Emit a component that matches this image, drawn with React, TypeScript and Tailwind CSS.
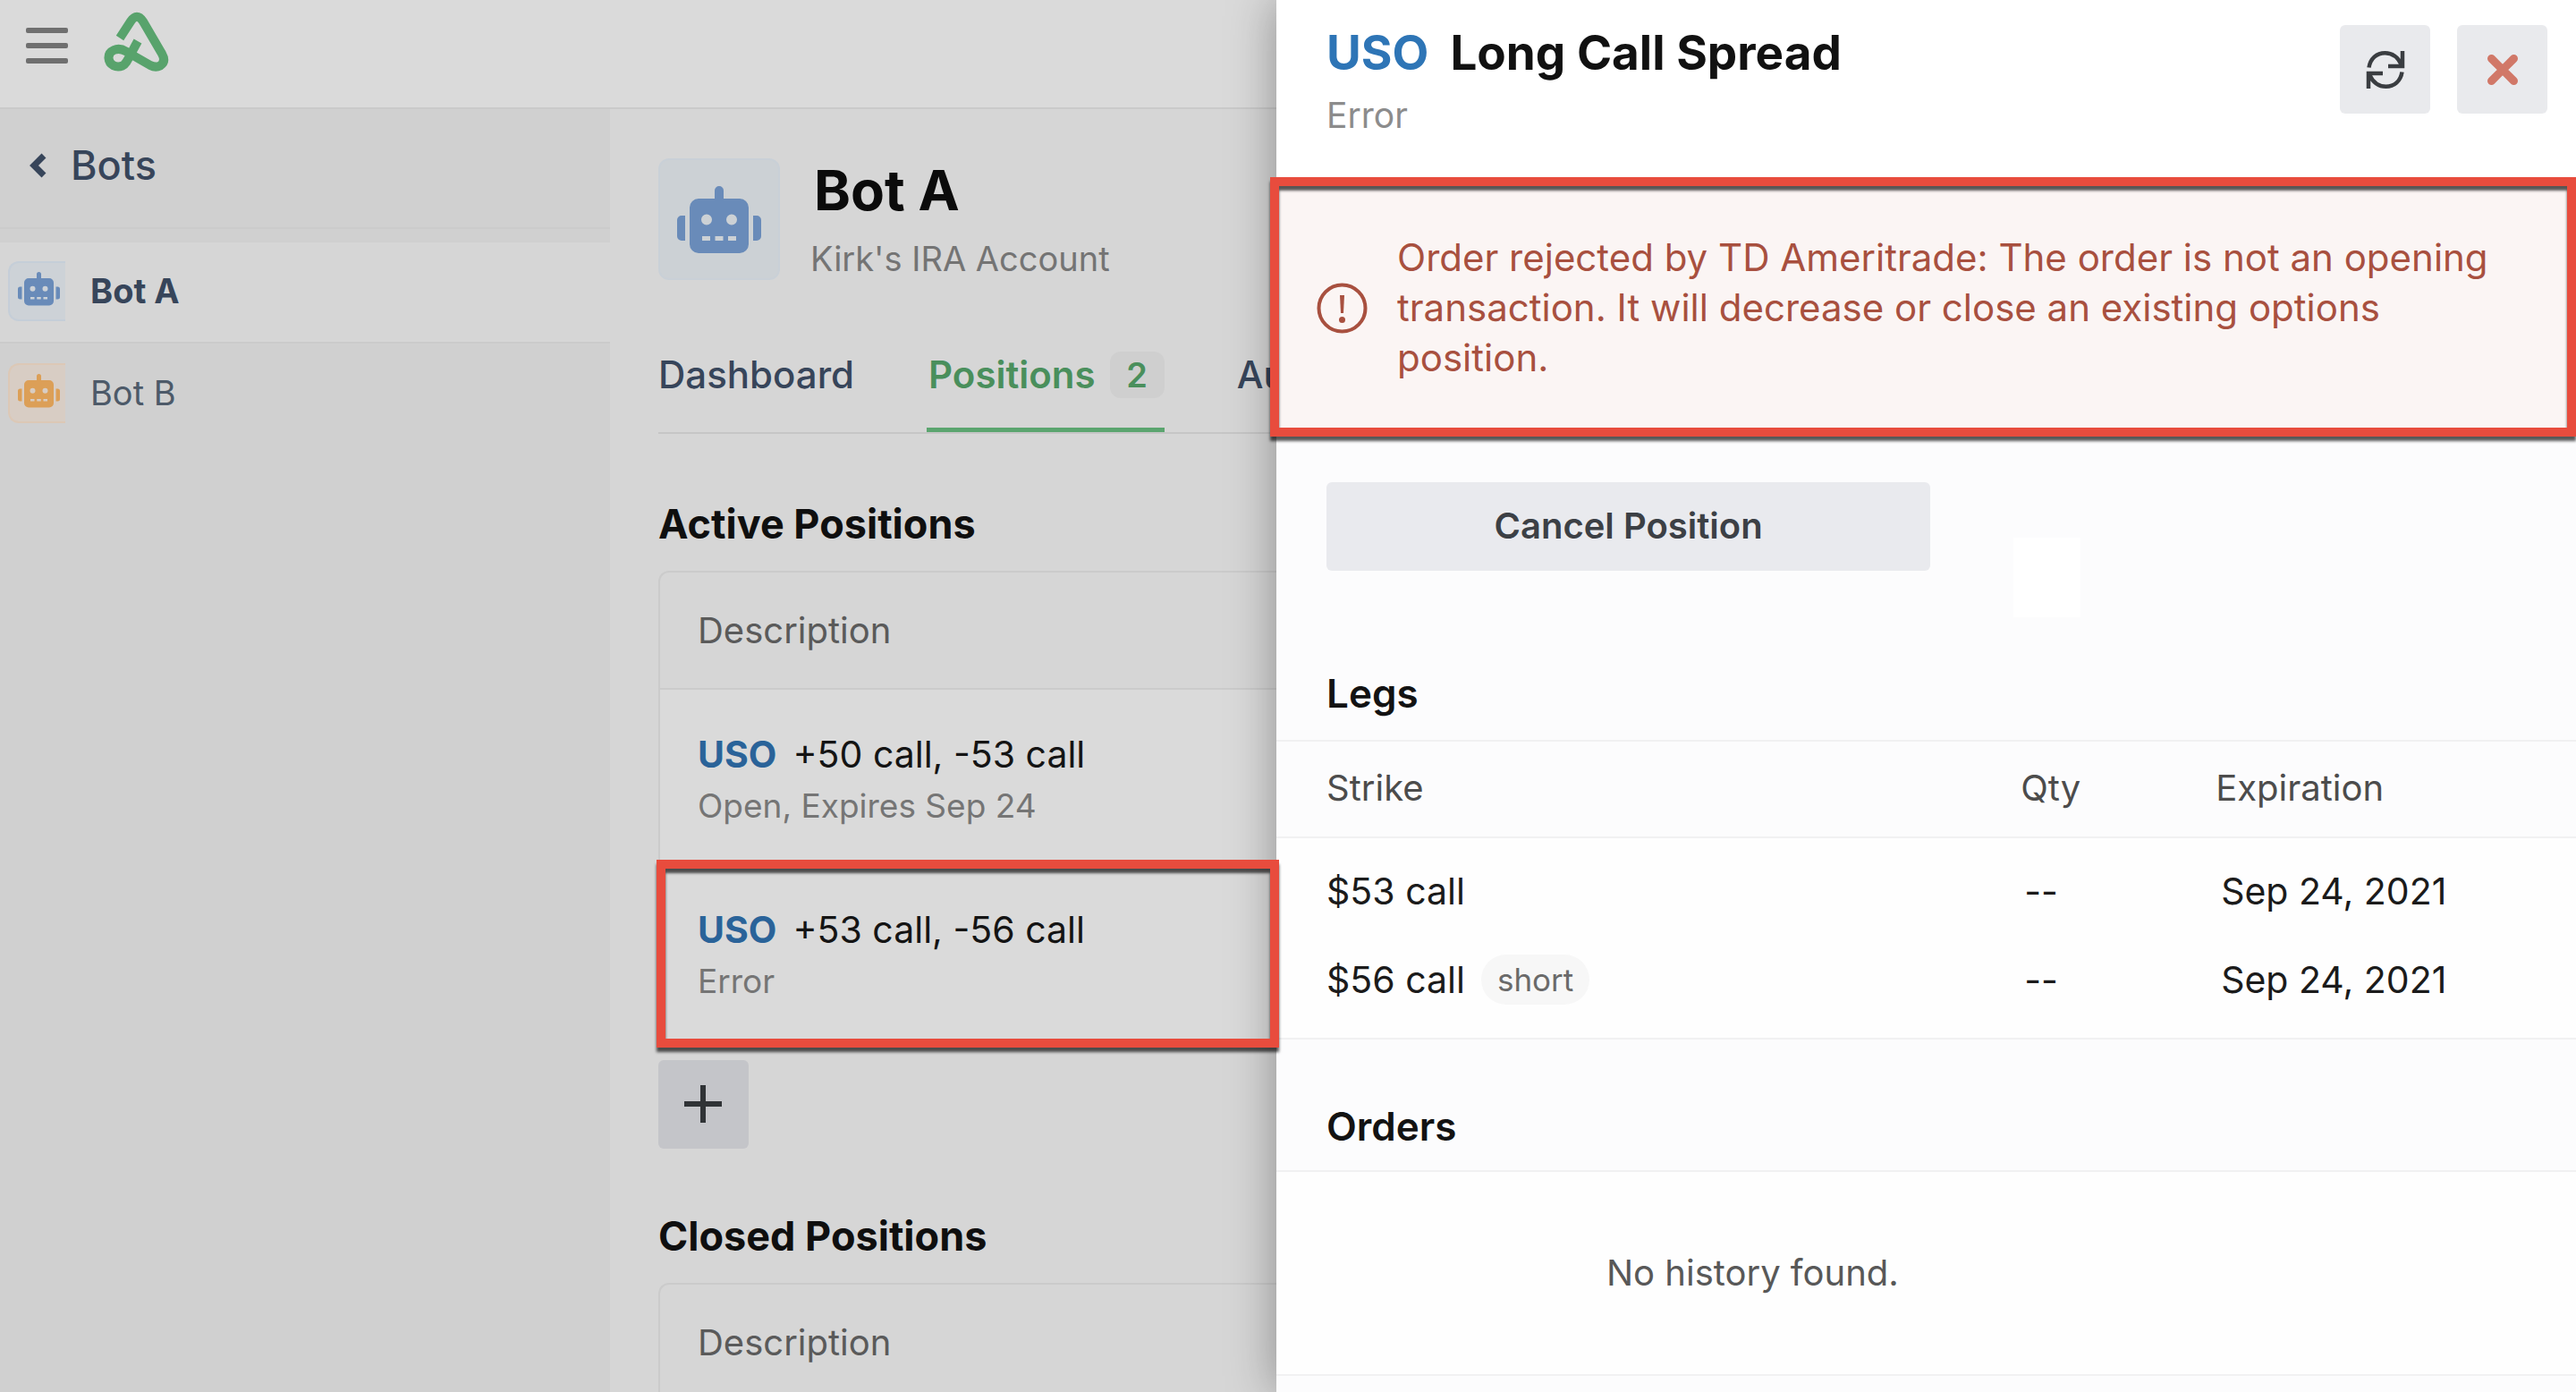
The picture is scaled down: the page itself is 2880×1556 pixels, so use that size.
import React from 'react';

interface Bot {
  name: string;
  active: boolean;
  tile: string;
  icon: string;
}

interface Position {
  symbol: string;
  legs: string;
  status: string;
  highlighted: boolean;
}

interface Leg {
  strike: string;
  short: boolean;
  qty: string;
  expiration: string;
}

const BOTS: Bot[] = [
  { name: 'Bot A', active: true, tile: 'border-[#c5ced8] bg-[#cdd2d7]', icon: 'text-[#698bb9]' },
  { name: 'Bot B', active: false, tile: 'border-[#dcc8b6] bg-[#d8cdc4]', icon: 'text-[#dc9f57]' },
];

const POSITIONS: Position[] = [
  { symbol: 'USO', legs: '+50 call, -53 call', status: 'Open, Expires Sep 24', highlighted: false },
  { symbol: 'USO', legs: '+53 call, -56 call', status: 'Error', highlighted: true },
];

const LEGS: Leg[] = [
  { strike: '$53 call', short: false, qty: '--', expiration: 'Sep 24, 2021' },
  { strike: '$56 call', short: true, qty: '--', expiration: 'Sep 24, 2021' },
];

function Logo() {
  return (
    <svg viewBox="116 13 74 68" className="h-[68px] w-[74px]" fill="none" stroke="#58a36c" strokeWidth="10" strokeLinejoin="round">
      <path d="M134 42.5 L146 24 Q153 13.500 160 24 L181 60 Q186 69 179 73.500 Q174 76 168 73 L141 57.500 C131 51.500 121 57 121.500 65 C122 73 130 76 137 73.500 C141.500 71.500 143 66 154 46" />
    </svg>
  );
}

function RobotIcon({ className }: { className: string }) {
  return (
    <svg viewBox="0 0 94 75" className={className} fill="currentColor">
      <path
        fillRule="evenodd"
        d="M42 5a5 5 0 0 1 10 0v9h18a10 10 0 0 1 10 10v41a10 10 0 0 1-10 10H24a10 10 0 0 1-10-10V24a10 10 0 0 1 10-10h18zM27 37.500a6 6 0 1 0 12 0a6 6 0 1 0-12 0zM55 37.500a6 6 0 1 0 12 0a6 6 0 1 0-12 0zM28 56v5h9v-5zM42.500 56v5h9v-5zM57 56v5h9v-5z"
      />
      <path d="M9 33v28H5a5 5 0 0 1-5-5V38a5 5 0 0 1 5-5zM85 33v28h4a5 5 0 0 0 5-5V38a5 5 0 0 0-5-5z" />
    </svg>
  );
}

function Sidebar() {
  return (
    <aside className="w-[682px] shrink-0 bg-[#d0d0d0]">
      <a href="#bots" className="mb-[15px] flex h-[134px] items-center border-b-2 border-[#cbcbcb] pb-[6px] pl-[32px] text-[45px] leading-[56px] font-medium text-[#37455a]">
        <svg viewBox="0 0 20 28" className="mr-[27px] h-7 w-5" fill="none" stroke="currentColor" strokeWidth="7">
          <path d="M17 3 L6 14 L17 25" />
        </svg>
        Bots
      </a>
      <nav>
        {BOTS.map((bot) => (
          <a
            key={bot.name}
            href="#bot"
            className={`flex h-[113px] items-center gap-[28px] pb-[3px] pl-[9px] text-[38px] leading-[56px] ${
              bot.active ? 'border-b-2 border-[#cbcbcb] bg-[#d6d6d6] font-bold text-[#37455a]' : 'text-[#4d5a69]'
            }`}
          >
            <span className={`flex h-[67px] w-[64px] items-center justify-center rounded-l-xl border-y-2 border-l-2 ${bot.tile}`}>
              <RobotIcon className={`mr-[-2px] mb-[4px] w-[47px] ${bot.icon}`} />
            </span>
            {bot.name}
          </a>
        ))}
      </nav>
    </aside>
  );
}

function PositionsTable({ rows }: { rows: Position[] }) {
  return (
    <div className="mt-6 rounded-tl-xl border-t-2 border-l-2 border-[#cbcbcb]">
      <table className="w-full border-separate border-spacing-0 text-left">
        <thead>
          <tr>
            <th className="h-[131px] border-b-2 border-[#cbcbcb] pl-[42px] text-[40px] leading-[56px] font-normal text-[#5a5a5a]">
              Description
            </th>
          </tr>
        </thead>
        <tbody>
          {rows.map((row) => (
            <tr key={row.legs}>
              <td className="relative bg-[#dadada] pt-[44px] pb-[36px] pl-[42px]">
                <div className="text-[41px] leading-[56px] text-[#141414]">
                  <span className="mr-[18px] font-bold text-[#2a6399]">{row.symbol}</span>
                  {row.legs}
                </div>
                <div className="text-[37px] leading-[60px] text-[#757575]">{row.status}</div>
                {row.highlighted && (
                  <div className="pointer-events-none absolute -top-[6px] -right-[3px] -bottom-[8px] -left-[4px] z-20 border-[10px] border-[#e84c3d] shadow-[0_5px_3px_rgba(0,0,0,0.65),inset_0_5px_3px_rgba(0,0,0,0.65)]" />
                )}
              </td>
            </tr>
          ))}
        </tbody>
      </table>
    </div>
  );
}

function BotPage() {
  return (
    <main className="min-w-0 flex-1 pt-[55px] pl-[54px]">
      <div className="flex h-[140px] items-start gap-[34px]">
        <div className="flex h-[136px] w-[136px] items-center justify-center rounded-xl border-2 border-[#c9d0d7] bg-[#ccd1d5]">
          <RobotIcon className="w-[94px] text-[#698bb9]" />
        </div>
        <div>
          <h1 className="pl-1 text-[62px] leading-[72px] font-bold text-[#0b0b0b]">Bot A</h1>
          <p className="mt-3 text-[38px] leading-[56px] text-[#747474]">Kirk's IRA Account</p>
        </div>
      </div>

      <nav className="mt-[76px] flex gap-[81px] border-b-2 border-[#c6c6c6] text-[42px] leading-[52px] font-medium text-[#37455a]">
        <a href="#dashboard">Dashboard</a>
        <a href="#positions" className="flex items-center gap-4 border-b-[5px] border-[#5ba56f] pb-[33px] pl-[2px] font-semibold text-[#4a8f5c]">
          Positions
          <span className="w-[61px] rounded-xl bg-[#cfcfcf] text-center text-[38px]">2</span>
        </a>
        <a href="#automations">Automations</a>
      </nav>

      <h2 className="mt-[73px] text-[45px] leading-[56px] font-bold text-[#0f0f0f]">Active Positions</h2>
      <PositionsTable rows={POSITIONS} />
      <button aria-label="Add position" className="mt-[22px] flex h-[99px] w-[101px] items-center justify-center rounded-md bg-[#c4c5c9] pr-[2px] pb-[2px]">
        <svg viewBox="0 0 42 42" className="h-[42px] w-[42px]" fill="none" stroke="#303336" strokeWidth="6">
          <path d="M21 0V42M0 21H42" />
        </svg>
      </button>

      <h2 className="mt-[70px] text-[45px] leading-[56px] font-bold text-[#0f0f0f]">Closed Positions</h2>
      <PositionsTable rows={[]} />
    </main>
  );
}

function OrderError() {
  return (
    <div role="alert" className="-ml-[7px] flex items-center gap-[33px] border-[10px] border-[#e84c3d] bg-[#fbf5f4] pt-[52px] pr-[70px] pb-[50px] pl-[42px] text-[#a8503f] shadow-[0_5px_3px_rgba(0,0,0,0.65),inset_0_5px_3px_rgba(0,0,0,0.65)]">
      <svg viewBox="0 0 57 57" className="h-[57px] w-[57px] shrink-0" fill="none" stroke="currentColor" strokeWidth="4">
        <circle cx="28.500" cy="28.500" r="26" />
        <path d="M26 14h5l-1 20h-3z" fill="currentColor" stroke="none" />
        <circle cx="28.500" cy="41.500" r="3.500" fill="currentColor" stroke="none" />
      </svg>
      <p className="text-[42px] leading-[56px]">
        Order rejected by TD Ameritrade: The order is not an opening transaction. It will decrease or close an existing options position.
      </p>
    </div>
  );
}

function PositionDrawer() {
  return (
    <section className="z-10 flex w-[50.45%] shrink-0 flex-col bg-[#fcfcfd] shadow-[0_0_50px_rgba(0,0,0,0.35)]">
      <header className="flex h-[198px] shrink-0 items-start justify-between bg-white pt-7 pr-8 pl-14">
        <div>
          <h2 className="text-[53px] leading-[62px] font-bold text-[#111]">
            <span className="mr-6 text-[#2e75b6]">USO</span>
            Long Call Spread
          </h2>
          <p className="mt-[11px] text-[39px] leading-[56px] text-[#8c8c8c]">Error</p>
        </div>
        <div className="flex gap-[30px]">
          <button aria-label="Refresh" className="flex h-[99px] w-[101px] items-center justify-center rounded-md bg-[#e9eaed]">
            <svg viewBox="0 0 44 44" className="h-[44px] w-[44px]" fill="none" stroke="#3a3d41" strokeWidth="4.500">
              <path d="M3.500 19.500C5 9.500 12 3.200 21.500 3.200C30 3.200 36 8 40 16.500M41 1V18H25" />
              <path d="M40.500 24.500C39 34.500 32 40.800 22.500 40.800C14 40.800 8 36 4 27.500M3 43V26H19" />
            </svg>
          </button>
          <button aria-label="Close" className="flex h-[99px] w-[101px] items-center justify-center rounded-md bg-[#e9eaed]">
            <svg viewBox="0 0 36 36" className="h-[36px] w-[36px]" fill="none" stroke="#d17868" strokeWidth="9" strokeLinecap="round">
              <path d="M5.500 5.500L30.500 30.500M30.500 5.500L5.500 30.500" />
            </svg>
          </button>
        </div>
      </header>

      <OrderError />

      <div className="border-b-2 border-[#f1f1f2] pt-[51px] pb-6 pl-14">
        <div className="flex items-start gap-[93px]">
          <button className="h-[99px] w-[675px] rounded-md bg-[#e9eaee] pb-[2px] text-[40px] leading-[56px] font-semibold text-[#3c4045]">
            Cancel Position
          </button>
          <div className="mt-[62px] h-[89px] w-[75px] bg-white" />
        </div>
        <h3 className="mt-[57px] text-[44px] leading-[56px] font-semibold text-[#131313]">Legs</h3>
      </div>

      <table className="w-full table-fixed border-separate border-spacing-0 text-left">
        <thead>
          <tr className="text-[40px] leading-[56px] text-[#4c4c4c] *:h-[108px] *:border-b-2 *:border-[#f1f1f2] *:pb-[2px] *:font-normal">
            <th className="w-[57%] pl-14">Strike</th>
            <th className="w-[15%] pl-1">Qty</th>
            <th className="pl-1">Expiration</th>
          </tr>
        </thead>
        <tbody className="bg-[#fefefe] text-[41px] leading-[56px] text-[#1b1b1b]">
          {LEGS.map((leg) => (
            <tr key={leg.strike} className="*:pt-[21px] *:pb-[22px] first:*:pt-[31px] last:*:pb-[37px]">
              <td className="pl-14">
                <div className="flex items-center gap-[18px]">
                  {leg.strike}
                  {leg.short && <span className="rounded-full bg-[#f7f7f7] px-[18px] text-[35px] text-[#6a6a6a]">short</span>}
                </div>
              </td>
              <td className="pl-2">{leg.qty}</td>
              <td className="pl-[10px]">{leg.expiration}</td>
            </tr>
          ))}
        </tbody>
      </table>

      <h3 className="border-y-2 border-[#f1f1f2] pt-[69px] pb-[21px] pl-14 text-[44px] leading-[56px] font-semibold text-[#131313]">
        Orders
      </h3>
      <div className="border-b-2 border-[#f1f1f2] bg-[#fefefe] py-[85px] text-[40px] leading-[56px] text-[#585858]">
        <p className="w-[73%] pl-1 text-center">No history found.</p>
      </div>
    </section>
  );
}

export default function App() {
  return (
    <div className="flex h-screen overflow-hidden bg-[#d6d6d6] font-['Inter',sans-serif]">
      <div className="min-w-0 flex-1">
        <header className="flex h-[122px] items-start border-b-2 border-[#cacaca] bg-[#dadada] pt-[13px] pl-[29px]">
          <button aria-label="Menu" className="mt-[18px] mr-[40px] flex w-[47px] flex-col gap-[11px]">
            <span className="h-[6px] w-full rounded-xs bg-[#6f6f6f]" />
            <span className="h-[6px] w-full rounded-xs bg-[#6f6f6f]" />
            <span className="h-[6px] w-full rounded-xs bg-[#6f6f6f]" />
          </button>
          <Logo />
        </header>
        <div className="flex min-h-full">
          <Sidebar />
          <BotPage />
        </div>
      </div>
      <PositionDrawer />
    </div>
  );
}
